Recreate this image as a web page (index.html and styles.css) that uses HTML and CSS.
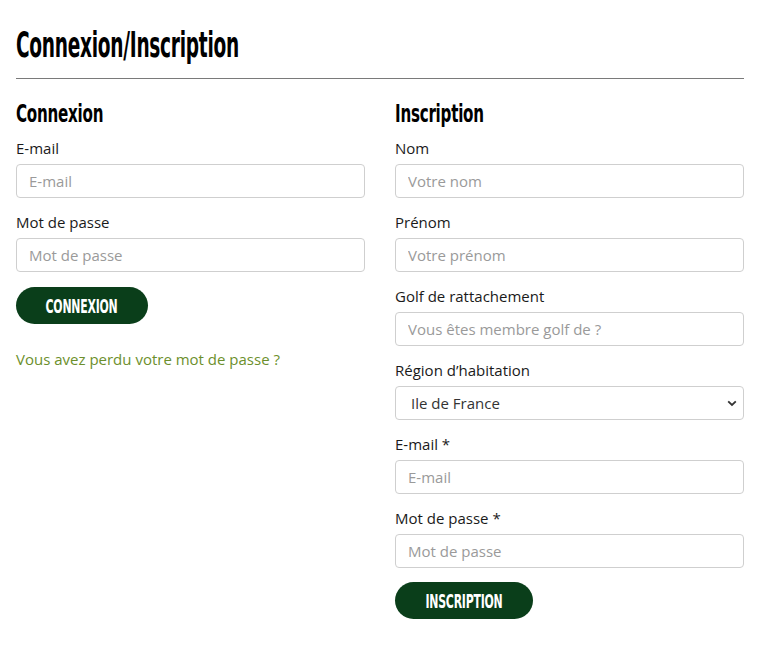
FILE: index.html
```html
<!DOCTYPE html>
<html lang="fr">
<head>
<meta charset="utf-8">
<title>Connexion/Inscription</title>
<link rel="stylesheet" href="styles.css">
</head>
<body>
<main class="page">
  <h1 class="page-title"><span class="cond">Connexion/Inscription</span></h1>
  <hr class="rule">
  <div class="columns">
    <section class="col">
      <h2 class="col-title"><span class="cond">Connexion</span></h2>
      <div class="field">
        <label class="label">E-mail</label>
        <input class="input" type="text" placeholder="E-mail">
      </div>
      <div class="field">
        <label class="label">Mot de passe</label>
        <input class="input" type="password" placeholder="Mot de passe">
      </div>
      <button class="btn btn-login"><span class="btn-text">CONNEXION</span></button>
      <a class="lost" href="#">Vous avez perdu votre mot de passe ?</a>
    </section>
    <section class="col">
      <h2 class="col-title"><span class="cond">Inscription</span></h2>
      <div class="field">
        <label class="label">Nom</label>
        <input class="input" type="text" placeholder="Votre nom">
      </div>
      <div class="field">
        <label class="label">Prénom</label>
        <input class="input" type="text" placeholder="Votre prénom">
      </div>
      <div class="field">
        <label class="label">Golf de rattachement</label>
        <input class="input" type="text" placeholder="Vous êtes membre golf de ?">
      </div>
      <div class="field">
        <label class="label">Région d’habitation</label>
        <div class="select-wrap">
          <select class="input select">
            <option>Ile de France</option>
          </select>
          <svg class="chevron" width="10" height="7" viewBox="0 0 10 7"><path d="M1.2 1.3 L5 5 L8.8 1.3" fill="none" stroke="#333" stroke-width="1.8"/></svg>
        </div>
      </div>
      <div class="field">
        <label class="label">E-mail *</label>
        <input class="input" type="text" placeholder="E-mail">
      </div>
      <div class="field">
        <label class="label">Mot de passe *</label>
        <input class="input" type="password" placeholder="Mot de passe">
      </div>
      <button class="btn btn-signup"><span class="btn-text">INSCRIPTION</span></button>
    </section>
  </div>
</main>
</body>
</html>
```

FILE: styles.css
```css
html, body {
  margin: 0;
  padding: 0;
  background: #fff;
}
body {
  font-family: "Open Sans", "Noto Sans", sans-serif;
  color: #1a1a1a;
}
.page {
  width: 728px;
  padding: 26px 16px 40px 16px;
}
.cond {
  display: inline-block;
  transform-origin: left center;
  white-space: nowrap;
}
.page-title {
  margin: 0;
  font-family: "DejaVu Sans", sans-serif;
  font-weight: 700;
  font-size: 35px;
  line-height: 38px;
  letter-spacing: -0.5px;
  color: #000;
}
.page-title .cond {
  transform: scaleX(0.53);
}
.rule {
  margin: 14px 0 0 0;
  border: 0;
  border-top: 1px solid #7a7a7a;
  height: 0;
}
.columns {
  display: grid;
  grid-template-columns: 349px 349px;
  column-gap: 30px;
}
.col {
  display: flex;
  flex-direction: column;
  align-items: flex-start;
}
.col-title {
  margin: 20px 0 9px 0;
  font-family: "DejaVu Sans", sans-serif;
  font-weight: 700;
  font-size: 25px;
  line-height: 30px;
  letter-spacing: -0.4px;
  color: #000;
}
.col-title .cond {
  transform: scaleX(0.605);
}
.field {
  display: flex;
  flex-direction: column;
  width: 100%;
  margin-bottom: 14px;
}
.label {
  font-size: 15px;
  line-height: 20px;
  margin-bottom: 6px;
  color: #1a1a1a;
}
.input {
  box-sizing: border-box;
  width: 100%;
  height: 34px;
  border: 1px solid #cfcfcf;
  border-radius: 4px;
  padding: 0 12px;
  font-family: "Open Sans", "Noto Sans", sans-serif;
  font-size: 15px;
  color: #333;
  background: #fff;
  outline: none;
}
.input::placeholder {
  color: #9a9a9a;
}
.select-wrap {
  position: relative;
  width: 100%;
}
.select {
  appearance: none;
  -webkit-appearance: none;
  padding-left: 15px;
  color: #333;
}
.chevron {
  position: absolute;
  right: 7px;
  top: 14px;
}
.btn {
  display: flex;
  align-items: center;
  justify-content: center;
  border: 0;
  border-radius: 19px;
  height: 37px;
  padding: 0;
  background: #0a3e1a;
  color: #fff;
  font-family: "DejaVu Sans", sans-serif;
  font-weight: 700;
  font-size: 19px;
  letter-spacing: -0.4px;
  cursor: pointer;
}
.btn-text {
  display: inline-block;
  transform: scaleX(0.575);
  white-space: nowrap;
}
.btn-login {
  width: 132px;
  margin-top: 1px;
}
.btn-signup {
  width: 138px;
  margin-top: 0;
}
.lost {
  margin-top: 25px;
  font-size: 15px;
  line-height: 20px;
  color: #6c8f2c;
  text-decoration: none;
}
```
